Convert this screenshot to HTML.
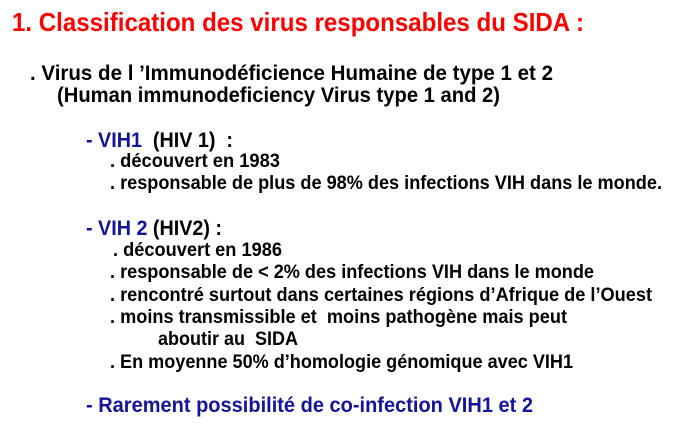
<!DOCTYPE html>
<html><head><meta charset="utf-8"><style>
body{margin:0;width:692px;height:429px;background:#fff;position:relative;overflow:hidden;font-family:"Liberation Sans",Arial,sans-serif;font-weight:bold;color:#000}
.l{position:absolute;white-space:pre;line-height:1;transform-origin:0 50%}
.r{color:#f00}.b{color:#14149a}
</style></head><body>
<div class="l r" data-w="572" style="left:12px;top:9px;font-size:26px">1. Classification des virus responsables du SIDA :</div>
<div class="l" data-w="523" style="left:30px;top:63px;font-size:21px">. Virus de l ’Immunodéficience Humaine de type 1 et 2</div>
<div class="l" data-w="443" style="left:57px;top:85px;font-size:21px">(Human immunodeficiency Virus type 1 and 2)</div>
<div class="l" data-w="147" style="left:86px;top:130px;font-size:21px"><span class="b">- VIH1</span>  (HIV 1)  :</div>
<div class="l" data-w="170" style="left:110px;top:152px;font-size:19px">. découvert en 1983</div>
<div class="l" data-w="552" style="left:110px;top:174px;font-size:19px">. responsable de plus de 98% des infections VIH dans le monde.</div>
<div class="l" data-w="136" style="left:86px;top:218px;font-size:21px"><span class="b">- VIH 2</span> (HIV2) :</div>
<div class="l" data-w="169" style="left:113px;top:241px;font-size:19px">. découvert en 1986</div>
<div class="l" data-w="484" style="left:110px;top:263px;font-size:19px">. responsable de &lt; 2% des infections VIH dans le monde</div>
<div class="l" data-w="542" style="left:110px;top:286px;font-size:19px">. rencontré surtout dans certaines régions d’Afrique de l’Ouest</div>
<div class="l" data-w="457" style="left:110px;top:308px;font-size:19px">. moins transmissible et  moins pathogène mais peut</div>
<div class="l" data-w="140" style="left:158px;top:330px;font-size:19px">aboutir au  SIDA</div>
<div class="l" data-w="463" style="left:110px;top:353px;font-size:19px">. En moyenne 50% d’homologie génomique avec VIH1</div>
<div class="l b" data-w="447" style="left:86px;top:395px;font-size:21px">- Rarement possibilité de co-infection VIH1 et 2</div>
<script>
document.querySelectorAll('.l').forEach(function(e){var w=e.getBoundingClientRect().width;var t=+e.dataset.w;if(w>0)e.style.transform='scaleX('+(t/w)+')';});
</script>
</body></html>
